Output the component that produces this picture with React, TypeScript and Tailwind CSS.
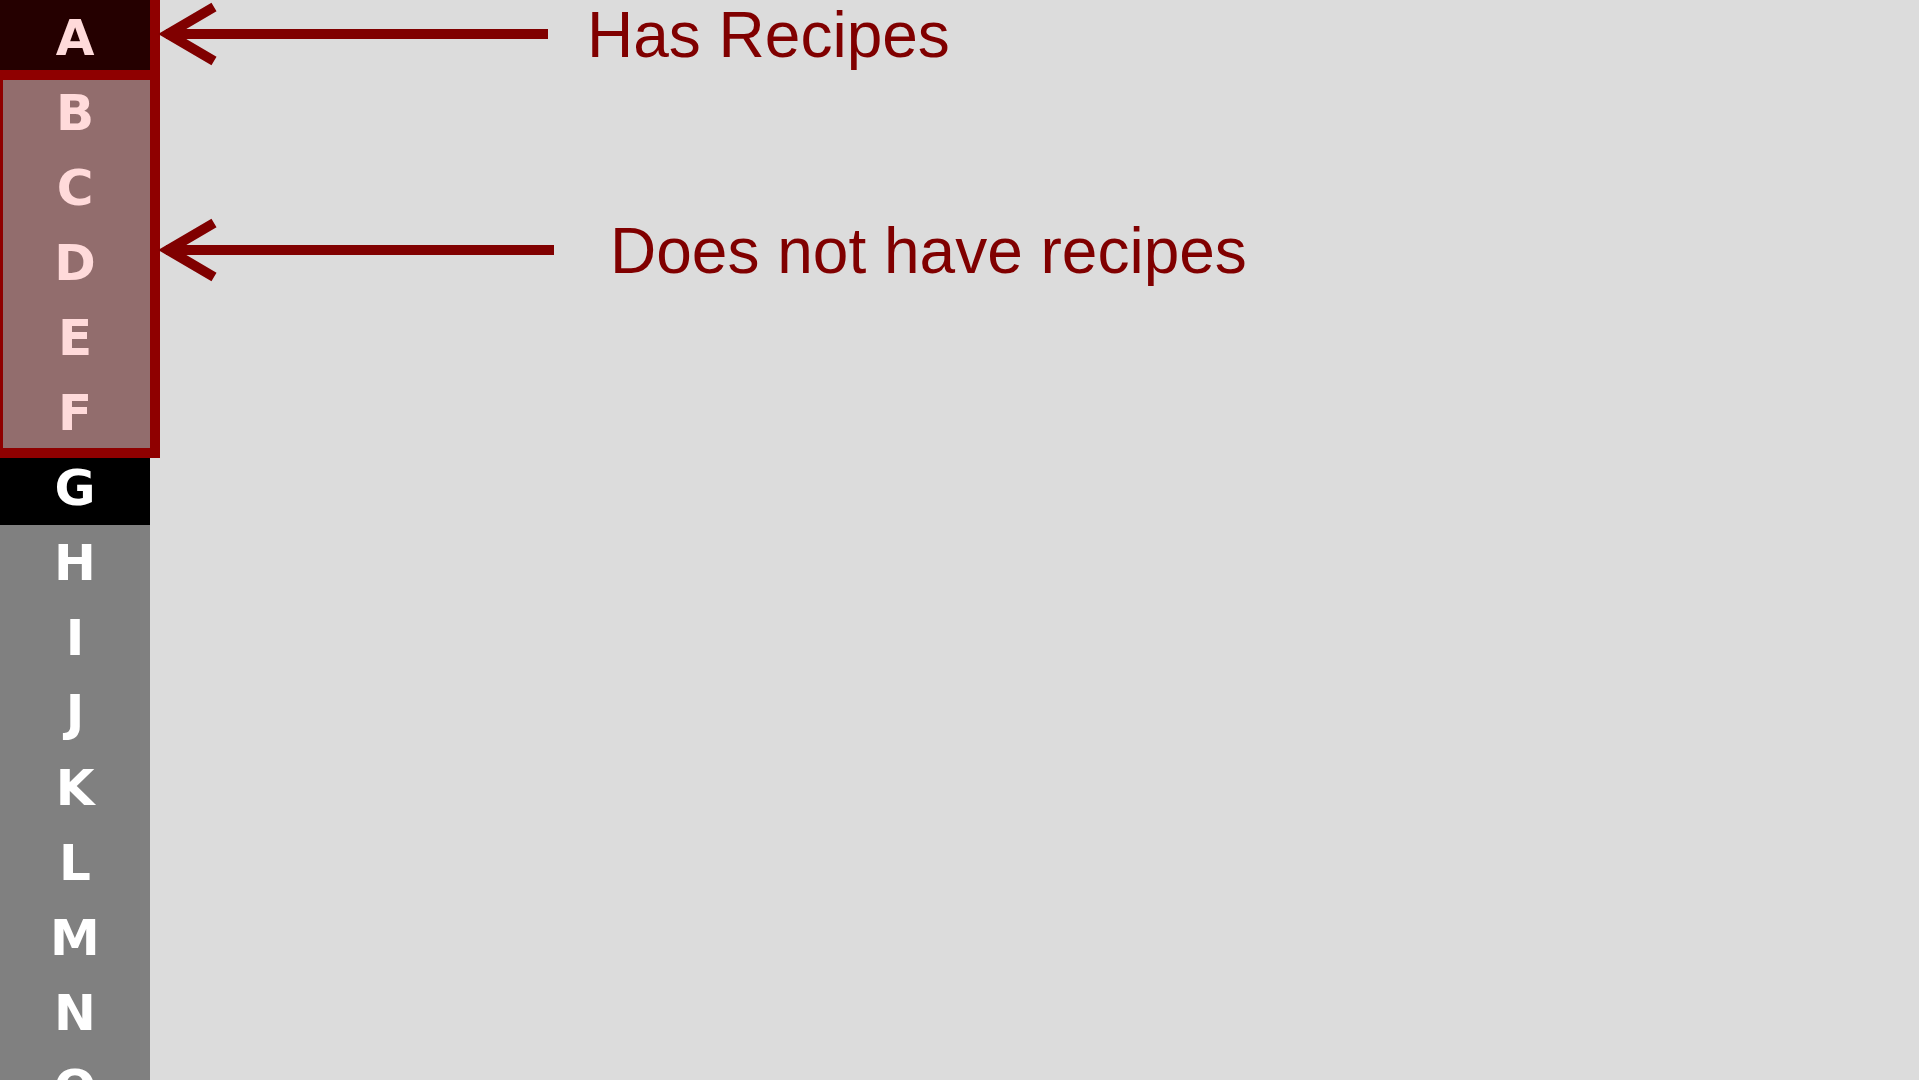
const letters = 'ABCDEFGHIJKLMNO'.split('');

// rows A and G are shown as the "current" dark rows
const dark = new Set(['A', 'G']);

function Arrow({ y, end }: { y: number; end: number }) {
  return (
    <g stroke="#800000" strokeWidth={10} fill="none">
      <line x1={166} y1={y} x2={end} y2={y} />
      <polyline points={`214,${y - 27} 168,${y} 214,${y + 27}`} strokeLinejoin="miter" />
    </g>
  );
}

export default function App() {
  return (
    <div className="relative flex h-screen w-full overflow-hidden bg-[#dcdcdc]">
      {/* Letter index */}
      <div className="flex w-[150px] shrink-0 flex-col bg-[#808080]">
        {letters.map((l) => (
          <div
            key={l}
            className={`flex h-[75px] shrink-0 items-center justify-center text-[50px] font-bold leading-none text-white ${
              dark.has(l) ? 'bg-black' : 'bg-[#808080]'
            }`}
            style={{ fontFamily: '"DejaVu Sans", Verdana, sans-serif' }}
          >
            {l}
          </div>
        ))}
      </div>

      {/* Highlight boxes over the index */}
      <div className="pointer-events-none absolute -left-[10px] -top-[10px] h-[90px] w-[170px] border-[10px] border-[#8f0000] bg-[rgba(255,0,0,0.145)]" />
      <div className="pointer-events-none absolute -left-[7px] top-[70px] h-[388px] w-[167px] border-[10px] border-[#8f0000] bg-[rgba(255,0,0,0.145)]" />

      {/* Annotations */}
      <svg className="pointer-events-none absolute inset-0" width="1919" height="1080">
        <Arrow y={34} end={548} />
        <Arrow y={250} end={554} />
      </svg>
      <div
        className="absolute left-[587px] top-[3px] whitespace-nowrap text-[64px] leading-none text-[#800000]"
        style={{ fontFamily: '"Liberation Sans", Arial, sans-serif' }}
      >
        Has Recipes
      </div>
      <div
        className="absolute left-[610px] top-[219px] whitespace-nowrap text-[64px] leading-none text-[#800000]"
        style={{ fontFamily: '"Liberation Sans", Arial, sans-serif' }}
      >
        Does not have recipes
      </div>
    </div>
  );
}
